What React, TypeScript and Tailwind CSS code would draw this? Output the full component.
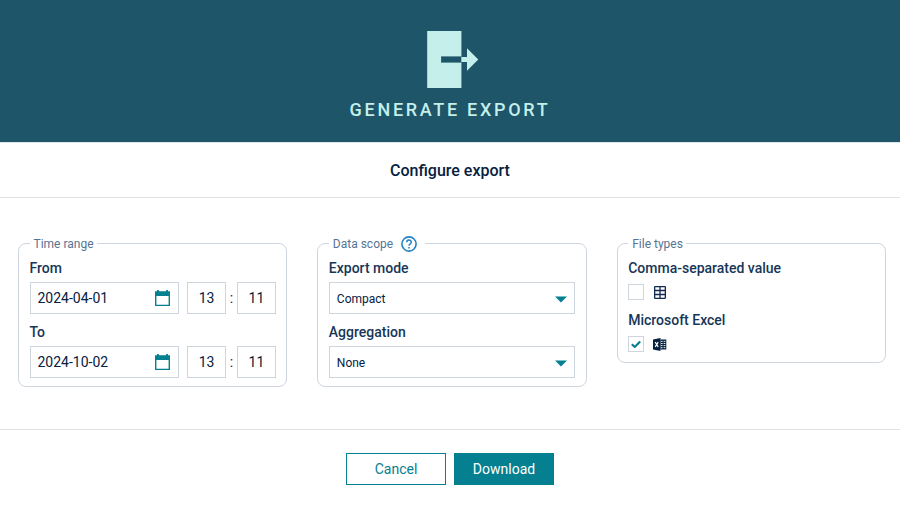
import React from "react";

function ExportIcon() {
  return (
    <svg className="block h-[57px] w-[52px]" viewBox="0 0 52 57">
      <rect x="0.2" y="0" width="34.2" height="57" fill="#c5efeb" />
      <rect x="14" y="25" width="20.4" height="7" fill="#1e5568" fillOpacity="0.6" />
      <rect x="14.3" y="26" width="20.1" height="5" fill="#1e5568" />
      <path d="M34.4 26H40V17.2L51.3 28.5L40 39.8V31H34.4Z" fill="#c5efeb" />
    </svg>
  );
}

function CalendarIcon() {
  return (
    <svg className="block h-4 w-[15px]" viewBox="0 0 15 16" fill="#058090">
      <path
        fillRule="evenodd"
        d="M0 1.3H2V0.6Q2 0 2.6 0H3.4Q4 0 4 0.6V1.3H11V0.6Q11 0 11.6 0H12.4Q13 0 13 0.6V1.3H15V16H0ZM1.4 6V14.7H13.6V6Z"
      />
    </svg>
  );
}

function HelpIcon() {
  return (
    <svg className="block h-4 w-4" viewBox="0 0 16 16" fill="none" stroke="#2482c5">
      <circle cx="8" cy="8" r="7.1" strokeWidth="1.6" />
      <path d="M5.700 6.300C5.700 3.300 10.300 3.300 10.300 6.200C10.300 7.800 8 7.900 8 9.800" strokeWidth="1.500" />
      <path d="M8 10.900V12.500" strokeWidth="1.600" />
    </svg>
  );
}

function TableIcon() {
  return (
    <svg className="block h-[13px] w-3" viewBox="0 0 12 13">
      <rect x="0.650" y="0.650" width="10.700" height="11.700" rx="0.500" fill="none" stroke="#12294b" strokeWidth="1.300" />
      <path d="M0.600 4.500H11.400M0.600 8.500H11.400M6 0.600V12.400" fill="none" stroke="#12294b" strokeWidth="1.300" />
    </svg>
  );
}

function ExcelIcon() {
  return (
    <svg className="block h-[13px] w-[14px]" viewBox="0 0 14 13">
      <path d="M0 1.500L7.500 0V13L0 11.500Z" fill="#06213f" />
      <path d="M2.200 4.200L5.200 8.800M5.200 4.200L2.200 8.800" stroke="#fff" strokeWidth="1.200" fill="none" />
      <path d="M7.500 1.500H13.300V11.500H7.500Z" fill="#06213f" />
      <path d="M8 3.400H9.600M10.600 3.400H12.400M8 5.500H9.600M10.600 5.500H12.400M8 7.600H9.600M10.600 7.600H12.400M8 9.700H9.600M10.600 9.700H12.400" stroke="#fff" strokeWidth="0.900" />
    </svg>
  );
}

function Panel({ title, help, className, children }: { title: string; help?: boolean; className: string; children: React.ReactNode }) {
  return (
    <fieldset className={`min-w-0 flex-1 rounded-lg border border-[#ced5df] px-[10.5px] ${className}`}>
      <legend className={`flex h-[17px] items-center pl-1 text-xs text-[#587493] ${help ? "w-[96px]" : "pr-[3.500px]"}`}>
        <span>{title}</span>
        {help && <span className="ml-[7.5px]"><HelpIcon /></span>}
      </legend>
      {children}
    </fieldset>
  );
}

function Label({ children }: { children: React.ReactNode }) {
  return <div className="h-4 text-sm leading-4 font-medium text-[#173657]">{children}</div>;
}

function TimeRow({ label, date }: { label: string; date: string }) {
  return (
    <div>
      <Label>{label}</Label>
      <div className="mt-1.5 flex h-8 items-center text-sm">
        <div className="flex h-8 w-[150px] items-center justify-between border border-[#ced5df] pr-[8.5px] pl-[7px]">
          <span>{date}</span>
          <CalendarIcon />
        </div>
        <div className="ml-2 flex h-8 w-[39px] items-center justify-center border border-[#ced5df]">13</div>
        <span className="w-[11px] text-center">:</span>
        <div className="flex h-8 w-[39px] items-center justify-center border border-[#ced5df]">11</div>
      </div>
    </div>
  );
}

function SelectRow({ label, value }: { label: string; value: string }) {
  return (
    <div>
      <Label>{label}</Label>
      <div className="mt-1.5 flex h-8 items-center justify-between border border-[#ced5df] pt-px pr-[7px] pl-[7px] text-xs">
        <span>{value}</span>
        <svg className="mt-px block h-[7px] w-3" viewBox="0 0 12 7"><path d="M0 0.400H12L6 6.500Z" fill="#058090" /></svg>
      </div>
    </div>
  );
}

function FileRow({ label, checked, icon }: { label: string; checked?: boolean; icon: React.ReactNode }) {
  return (
    <div>
      <Label>{label}</Label>
      <div className="mt-2 flex h-4 items-center">
        <div className="flex h-4 w-4 items-center justify-center border border-[#ced5df]">
          {checked && (
            <svg className="block h-2 w-2.5" viewBox="0 0 10 8"><path d="M0.800 4.200L3.700 6.900L9.200 1.400" fill="none" stroke="#058090" strokeWidth="2.100" /></svg>
          )}
        </div>
        <div className="ml-2 flex w-4 justify-center">{icon}</div>
      </div>
    </div>
  );
}

export default function App() {
  return (
    <div className="flex h-[508px] w-[900px] flex-col overflow-hidden bg-white font-[Roboto,'Liberation_Sans',sans-serif] text-[#06213f]">
      <header className="flex h-[142px] shrink-0 flex-col items-center bg-[#1e5568] pt-[31px]">
        <div className="ml-[5px]"><ExportIcon /></div>
        <div className="mt-3 text-lg leading-5 font-medium tracking-[2.700px] text-[#c5efeb]">GENERATE EXPORT</div>
      </header>
      <div className="flex h-14 shrink-0 items-center justify-center border-t border-b border-t-[#dce6eb] border-b-[#e0e3e6] pt-0.5 text-base font-medium">
        Configure export
      </div>
      <main className="flex h-[231px] shrink-0 items-start gap-[30px] px-[18px] pt-[37px] pr-[14px]">
        <Panel title="Time range" className="h-[152px]">
          <div className="flex flex-col gap-2.5 pt-2">
            <TimeRow label="From" date="2024-04-01" />
            <TimeRow label="To" date="2024-10-02" />
          </div>
        </Panel>
        <Panel title="Data scope" help className="h-[152px]">
          <div className="flex flex-col gap-2.5 pt-2">
            <SelectRow label="Export mode" value="Compact" />
            <SelectRow label="Aggregation" value="None" />
          </div>
        </Panel>
        <Panel title="File types" className="h-[128px]">
          <div className="flex flex-col gap-3 pt-2">
            <FileRow label="Comma-separated value" icon={<TableIcon />} />
            <FileRow label="Microsoft Excel" checked icon={<ExcelIcon />} />
          </div>
        </Panel>
      </main>
      <footer className="flex flex-1 items-start justify-center gap-2 border-t border-[#e0e3e6] pt-[23px] text-sm">
        <button className="h-8 w-[100px] border border-[#058090] text-[#058090]">Cancel</button>
        <button className="h-8 w-[100px] bg-[#058090] text-white">Download</button>
      </footer>
    </div>
  );
}
